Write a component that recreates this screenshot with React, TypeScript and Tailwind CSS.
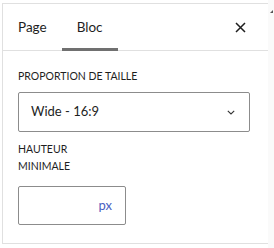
export default function App() {
  return (
    <div
      className="w-[274px] h-[248px] bg-white flex overflow-hidden text-[#1e1e1e]"
      style={{ fontFamily: 'Lato, "Noto Sans", sans-serif' }}
    >
      {/* Panel */}
      <div className="ml-[2px] mt-[3px] w-[266px] h-[241px] border-l border-t border-b border-[#e0e0e0] flex flex-col">
        {/* Tabs */}
        <div className="h-[47px] border-b border-[#e0e0e0] flex items-stretch shrink-0">
          <div className="px-[15px] flex items-center text-[13.5px]">Page</div>
          <div className="relative px-[15px] flex items-center text-[13.5px]">
            Bloc
            <div className="absolute left-0 right-0 -bottom-px h-[3px] bg-[#707070]" />
          </div>
          <div className="flex-1" />
          <div className="w-[48px] flex items-center justify-center mr-[4px]">
            <svg width="11" height="11" viewBox="0 0 11 11" fill="none">
              <path d="M1 1L10 10M10 1L1 10" stroke="#1e1e1e" strokeWidth="1.5" />
            </svg>
          </div>
        </div>

        {/* Body */}
        <div className="px-[15px] pt-[18px] flex flex-col">
          <div className="text-[10.5px] leading-[14px] uppercase">Proportion de taille</div>
          <div className="mt-[9px] w-[232px] h-[40px] border border-[#8c8c8c] rounded-[2px] flex items-center pl-[12px] pr-[14px]">
            <span className="text-[13px] flex-1">Wide - 16:9</span>
            <svg width="8" height="5" viewBox="0 0 8 5" fill="none">
              <path d="M0.8 0.8L4 4L7.2 0.8" stroke="#333" strokeWidth="1.1" />
            </svg>
          </div>

          <div className="mt-[9px] text-[10.5px] leading-[17px] uppercase">
            Hauteur
            <br />
            Minimale
          </div>
          <div className="mt-[11px] w-[108px] h-[39px] border border-[#8c8c8c] rounded-[2px] flex items-center justify-end pr-[13px]">
            <span className="text-[13px] text-[#4a5fc1]">px</span>
          </div>
        </div>
      </div>

      {/* Scrollbar track */}
      <div className="w-[6px] h-full bg-[#fafafa] flex flex-col items-center pt-[10px]">
        <div className="w-0 h-0 border-l-[3px] border-l-transparent border-b-[3px] border-b-[#555]" />
      </div>
    </div>
  );
}
